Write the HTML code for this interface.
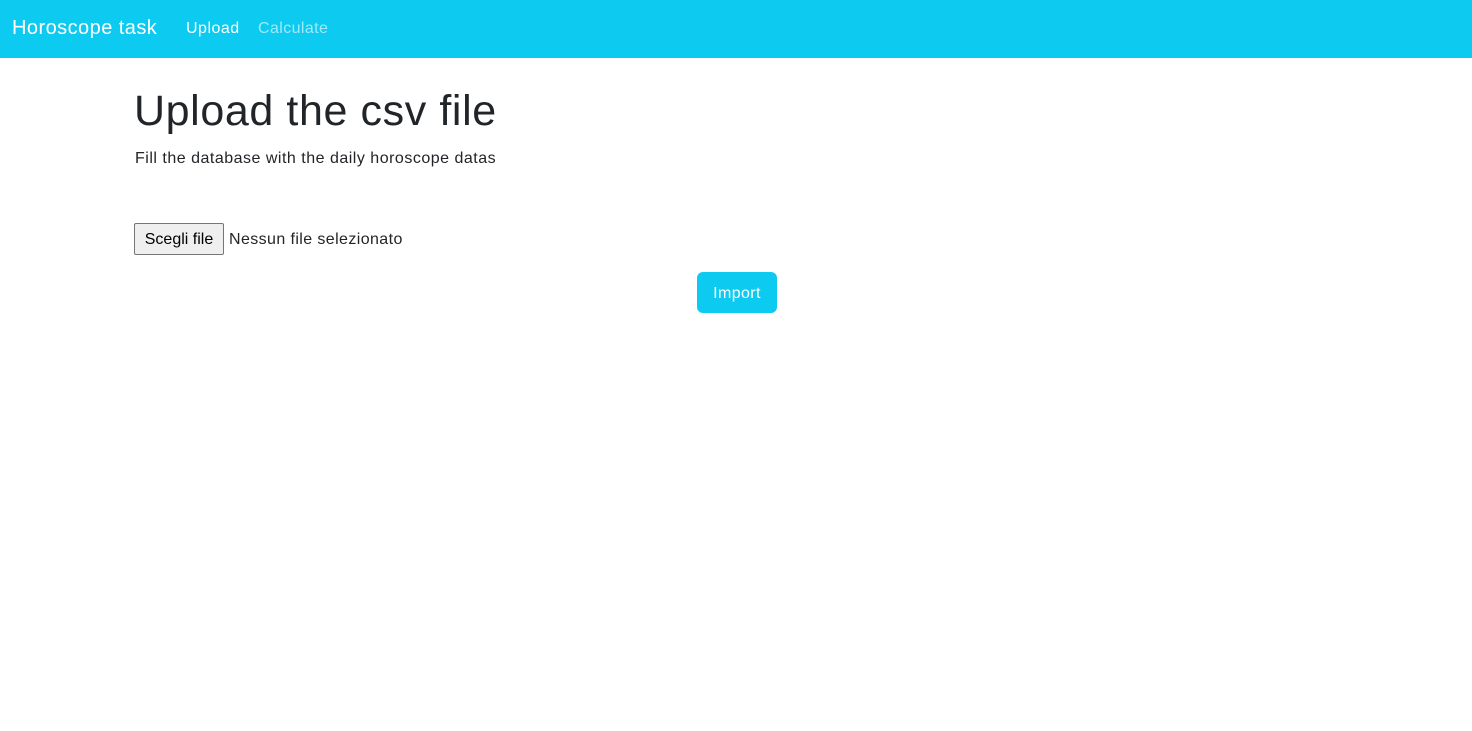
<!DOCTYPE html>
<html><head><style>
body{margin:0;font-family:"Liberation Sans",sans-serif;background:#fff;color:#212529;width:1472px;height:731px;overflow:hidden}
.nav{height:58px;background:#0dcaf0;position:relative}
.brand{position:absolute;left:12px;top:17px;font-size:20px;letter-spacing:0.45px;color:#fff;white-space:nowrap}
.l1{position:absolute;left:186px;top:20px;font-size:16px;letter-spacing:0.5px;color:#fff}
.l2{position:absolute;left:258px;top:20px;font-size:16px;letter-spacing:0.4px;color:rgba(255,255,255,.6)}
h1{position:absolute;left:134px;top:87px;margin:0;font-size:43px;letter-spacing:0.6px;font-weight:500;white-space:nowrap}
.p{position:absolute;left:135px;top:150px;font-size:16px;letter-spacing:0.5px;white-space:nowrap}
.fb{position:absolute;left:134px;top:223px;width:90px;height:32px;border:1px solid #767676;background:#efefef;border-radius:2px;font-size:16px;text-align:center;line-height:31px;color:#000;box-sizing:border-box}
.ft{position:absolute;left:229px;top:231px;font-size:16px;letter-spacing:0.4px;white-space:nowrap}
.btn{position:absolute;left:697px;top:272px;width:80px;height:41px;background:#0dcaf0;border-radius:6px;color:#fff;font-size:16px;letter-spacing:0.4px;text-align:center;line-height:43px}
</style></head><body>
<div class="nav"><span class="brand">Horoscope task</span><span class="l1">Upload</span><span class="l2">Calculate</span></div>
<h1>Upload the csv file</h1>
<div class="p">Fill the database with the daily horoscope datas</div>
<div class="fb">Scegli file</div><div class="ft">Nessun file selezionato</div>
<div class="btn">Import</div>
</body></html>
